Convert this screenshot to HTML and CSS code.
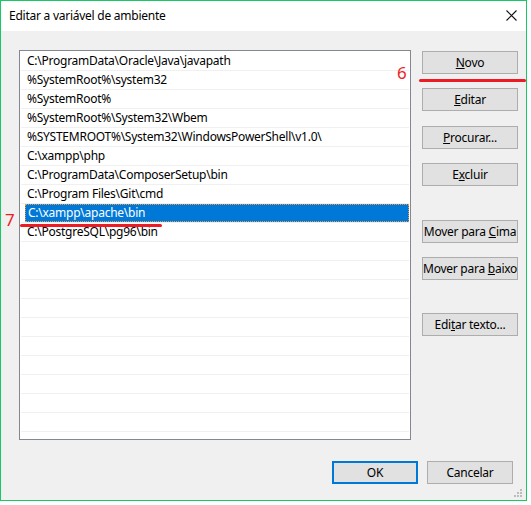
FILE: index.html
```html
<!DOCTYPE html>
<html lang="pt">
<head>
  <meta charset="UTF-8" />
  <title>Editar a variável de ambiente</title>
  <link rel="stylesheet" href="styles.css">
</head>
<body>
  <div class="window">
    <div class="titlebar">
      <span class="title">Editar a variável de ambiente</span>
      <svg class="close" width="11" height="11" viewBox="0 0 11 11">
        <path d="M0.5 0.5 L10.5 10.5 M10.5 0.5 L0.5 10.5" stroke="#111" stroke-width="1.1" fill="none"/>
      </svg>
    </div>

    <div class="content">
      <div class="main">
        <ul class="paths">
          <li><span>C:\ProgramData\Oracle\Java\javapath</span></li>
          <li><span>%SystemRoot%\system32</span></li>
          <li><span>%SystemRoot%</span></li>
          <li><span>%SystemRoot%\System32\Wbem</span></li>
          <li><span>%SYSTEMROOT%\System32\WindowsPowerShell\v1.0\</span></li>
          <li><span>C:\xampp\php</span></li>
          <li><span>C:\ProgramData\ComposerSetup\bin</span></li>
          <li><span>C:\Program Files\Git\cmd</span></li>
          <li class="selected"><span>C:\xampp\apache\bin</span></li>
          <li><span>C:\PostgreSQL\pg96\bin</span></li>
          <li></li><li></li><li></li><li></li><li></li>
          <li></li><li></li><li></li><li></li><li></li>
        </ul>

        <div class="side-buttons">
          <button><u>N</u>ovo</button>
          <button><u>E</u>ditar</button>
          <button class="gap-1"><u>P</u>rocurar...</button>
          <button>E<u>x</u>cluir</button>
          <button class="gap-big">Mover para <u>C</u>ima</button>
          <button>Mover para <u>b</u>aixo</button>
          <button class="gap-big2">Edi<u>t</u>ar texto...</button>
        </div>
      </div>

      <div class="footer">
        <button class="default">OK</button>
        <button>Cancelar</button>
      </div>
    </div>

    <!-- marcações em vermelho -->
    <span class="mark mark-6">6</span>
    <span class="line line-6"></span>
    <span class="mark mark-7">7</span>
    <span class="line line-7"></span>

    <svg class="grip" width="9" height="9" viewBox="0 0 9 9">
      <rect x="6" y="0" width="2" height="2" fill="#bcbcbc"/>
      <rect x="3" y="3" width="2" height="2" fill="#bcbcbc"/>
      <rect x="6" y="3" width="2" height="2" fill="#bcbcbc"/>
      <rect x="0" y="6" width="2" height="2" fill="#bcbcbc"/>
      <rect x="3" y="6" width="2" height="2" fill="#bcbcbc"/>
      <rect x="6" y="6" width="2" height="2" fill="#bcbcbc"/>
    </svg>
  </div>
</body>
</html>
```

FILE: styles.css
```css
* {
  box-sizing: border-box;
  margin: 0;
  padding: 0;
}

body {
  background: #fff;
  font-family: 'Noto Sans', 'Liberation Sans', sans-serif;
  font-size: 12px;
  letter-spacing: -0.25px;
  color: #000;
}

.window {
  position: relative;
  width: 527px;
  height: 501px;
  border: 1px solid #17c964;
  background: #f0f0f0;
}

.titlebar {
  height: 30px;
  background: #fff;
  display: flex;
  align-items: center;
  justify-content: space-between;
  padding: 0 9px 1px 8px;
}

.title {
  font-size: 12px;
}

.content {
  padding: 19px 7px 0 18px;
}

.main {
  display: flex;
  align-items: flex-start;
}

.paths {
  flex-shrink: 0;
  width: 392px;
  height: 390px;
  border: 1px solid #828790;
  background: #fff;
  list-style: none;
  padding: 1px 1px 0 1px;
  overflow: hidden;
}

.paths li {
  height: 19px;
  border-bottom: 1px solid #f0f0f0;
}

.paths li span {
  display: block;
  height: 18px;
  line-height: 18px;
  margin-left: 4px;
  padding-left: 2px;
  white-space: nowrap;
}

.paths li.selected span {
  background: #0078d7;
  color: #fff;
  border: 1px dotted #f39a3c;
  line-height: 16px;
  padding-left: 2px;
}

.side-buttons {
  flex-shrink: 0;
  display: flex;
  flex-direction: column;
  gap: 14px;
  margin-left: 11px;
  margin-top: 1px;
}

button {
  font-family: inherit;
  font-size: 12px;
  letter-spacing: inherit;
  color: #000;
  background: #e1e1e1;
  border: 1px solid #adadad;
  height: 23px;
  width: 96px;
  white-space: nowrap;
  padding: 0;
}

.side-buttons .gap-1 {
  margin-top: 1px;
}

.side-buttons .gap-big {
  margin-top: 20px;
}

.side-buttons .gap-big2 {
  margin-top: 19px;
}

.footer {
  display: flex;
  justify-content: flex-end;
  gap: 9px;
  margin-top: 21px;
  padding-right: 6px;
}

.footer button {
  width: 86px;
}

.footer button.default {
  border: 2px solid #0078d7;
}

.mark {
  position: absolute;
  color: #ed1c24;
  font-size: 17px;
  line-height: 17px;
}

.mark-6 {
  left: 396px;
  top: 63px;
}

.mark-7 {
  left: 4px;
  top: 210px;
}

.line {
  position: absolute;
  height: 3px;
  background: #ed1c24;
  border-radius: 2px;
}

.line-6 {
  left: 418px;
  top: 78px;
  width: 107px;
}

.line-7 {
  left: 19px;
  top: 223px;
  width: 142px;
}

.grip {
  position: absolute;
  right: 3px;
  bottom: 2px;
}
```
